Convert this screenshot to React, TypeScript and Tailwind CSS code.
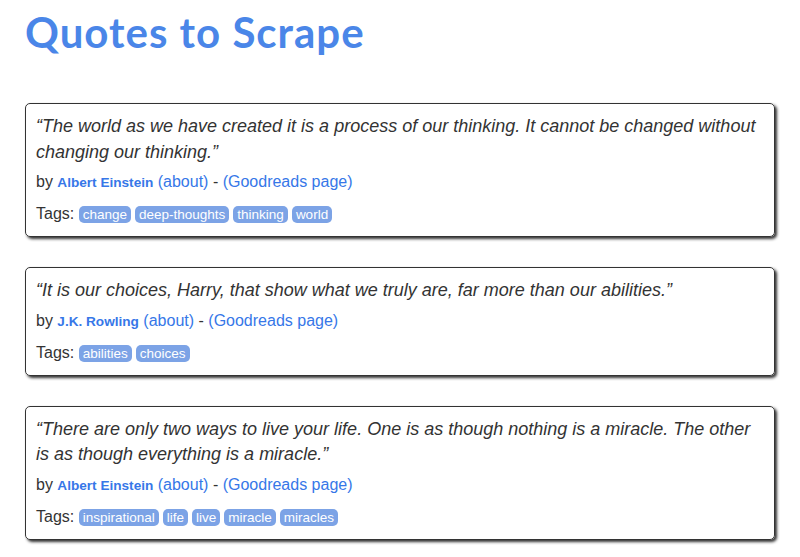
import React from 'react';

type Quote = {
  text: string;
  author: string;
  tags: string[];
};

const quotes: Quote[] = [
  {
    text: '“The world as we have created it is a process of our thinking. It cannot be changed without changing our thinking.”',
    author: 'Albert Einstein',
    tags: ['change', 'deep-thoughts', 'thinking', 'world'],
  },
  {
    text: '“It is our choices, Harry, that show what we truly are, far more than our abilities.”',
    author: 'J.K. Rowling',
    tags: ['abilities', 'choices'],
  },
  {
    text: '“There are only two ways to live your life. One is as though nothing is a miracle. The other is as though everything is a miracle.”',
    author: 'Albert Einstein',
    tags: ['inspirational', 'life', 'live', 'miracle', 'miracles'],
  },
];

const QuoteCard = ({ q }: { q: Quote }) => (
  <div className="w-[750px] border border-[#333333] rounded-[5px] shadow-[2px_2px_3px_#333333] p-[10px] mb-[30px]">
    <span className="block italic text-[18px] leading-[25.7px]">{q.text}</span>
    <div className="mt-[6px] text-[16px] leading-[22.9px]">
      by <small className="font-bold text-[13.6px] text-[#3677e8]">{q.author}</small>{' '}
      <a className="text-[#3677e8] cursor-pointer">(about)</a> -{' '}
      <a className="text-[#3677e8] cursor-pointer">(Goodreads page)</a>
    </div>
    <div className="mt-[8px] text-[16px] leading-[22.9px]">
      Tags:{' '}
      {q.tags.map((t) =>
      <a
        key={t}
        className="inline-block bg-[#7ca3e6] text-white text-[13.5px] leading-[17px] px-[4px] rounded-[5px] mr-[4px] cursor-pointer">
        
          {t}
        </a>
      )}
    </div>
  </div>
);

export default function App() {
  return (
    <div className="min-h-screen bg-white text-[#333333] px-[25px] font-['Liberation_Sans',Arial,sans-serif]">
      <h1 className="pt-[8px] pb-[47px] text-[42px] leading-[48px] font-bold tracking-[1px] text-[#4a86e8] font-['Lato','Noto_Sans',sans-serif]">
        Quotes to Scrape
      </h1>
      {quotes.map((q, i) => <QuoteCard key={i} q={q} />)}
    </div>);

}
